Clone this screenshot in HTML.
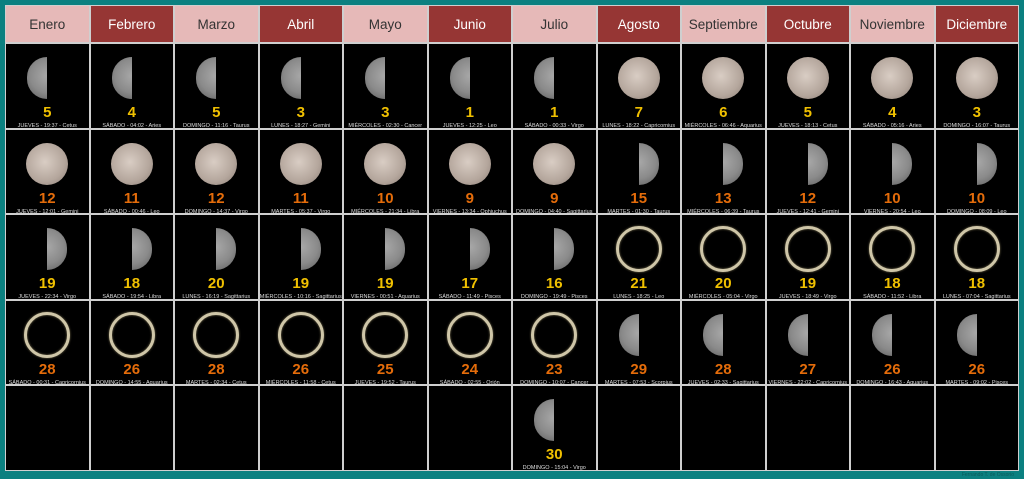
<!DOCTYPE html>
<html><head><meta charset="utf-8"><style>
*{margin:0;padding:0;box-sizing:border-box}
body{width:1024px;height:479px;background:#0b8080;position:relative;overflow:hidden;font-family:"Liberation Sans",sans-serif}
.g{position:absolute;left:5px;top:5px;width:1014px;height:466px;background:#cfcfcf;display:grid;grid-template-columns:repeat(12,1fr);grid-template-rows:36px repeat(5,1fr);gap:2px;border:1px solid #cfcfcf}
.h{display:flex;align-items:center;justify-content:center;font-size:13.5px;background:#e6b9b8;color:#333}
.h.d{background:#963634;color:#fff}
.c{background:#000;position:relative}
.m{position:absolute;top:13px;left:50%}
.l{width:20px;height:42px;margin-left:-20px;border-radius:21px 0 0 21px;background:radial-gradient(circle at 100% 45%,#a8a8a8,#8a8a8a 55%,#5a5a5a)}
.r{width:20px;height:42px;margin-left:0;border-radius:0 21px 21px 0;background:radial-gradient(circle at 0% 45%,#a8a8a8,#8a8a8a 55%,#5a5a5a)}
.f{width:42px;height:42px;margin-left:-21px;border-radius:50%;background:radial-gradient(circle at 45% 45%,#d9cdc4,#b4a69c 60%,#8a7c74)}
.n{width:46px;height:46px;margin-left:-23px;top:11px;border-radius:50%;border:3px solid #cfc6a8;box-shadow:inset 0 0 2px #7a7050,0 0 2px #7a7050}
.num{position:absolute;top:60px;width:100%;text-align:center;font-weight:bold;font-size:15px;color:#f0c000}
.o .num{color:#e46c0a}
.t{position:absolute;top:79px;width:100%;text-align:center;font-size:5.5px;color:#ddd;white-space:nowrap}
.cr{position:absolute;right:10px;bottom:1px;font-size:5px;color:#0a5a5a}
</style></head><body>
<div class="g">
<div class="h">Enero</div><div class="h d">Febrero</div><div class="h">Marzo</div><div class="h d">Abril</div><div class="h">Mayo</div><div class="h d">Junio</div><div class="h">Julio</div><div class="h d">Agosto</div><div class="h">Septiembre</div><div class="h d">Octubre</div><div class="h">Noviembre</div><div class="h d">Diciembre</div>

<div class="c"><div class="m l"></div><div class="num">5</div><div class="t">JUEVES - 19:37 - Cetus</div></div>
<div class="c"><div class="m l"></div><div class="num">4</div><div class="t">SÁBADO - 04:02 - Aries</div></div>
<div class="c"><div class="m l"></div><div class="num">5</div><div class="t">DOMINGO - 11:16 - Taurus</div></div>
<div class="c"><div class="m l"></div><div class="num">3</div><div class="t">LUNES - 18:27 - Gemini</div></div>
<div class="c"><div class="m l"></div><div class="num">3</div><div class="t">MIÉRCOLES - 02:30 - Cancer</div></div>
<div class="c"><div class="m l"></div><div class="num">1</div><div class="t">JUEVES - 12:25 - Leo</div></div>
<div class="c"><div class="m l"></div><div class="num">1</div><div class="t">SÁBADO - 00:33 - Virgo</div></div>
<div class="c"><div class="m f"></div><div class="num">7</div><div class="t">LUNES - 18:22 - Capricornius</div></div>
<div class="c"><div class="m f"></div><div class="num">6</div><div class="t">MIÉRCOLES - 06:46 - Aquarius</div></div>
<div class="c"><div class="m f"></div><div class="num">5</div><div class="t">JUEVES - 18:13 - Cetus</div></div>
<div class="c"><div class="m f"></div><div class="num">4</div><div class="t">SÁBADO - 05:16 - Aries</div></div>
<div class="c"><div class="m f"></div><div class="num">3</div><div class="t">DOMINGO - 16:07 - Taurus</div></div>

<div class="c o"><div class="m f"></div><div class="num">12</div><div class="t">JUEVES - 12:01 - Gemini</div></div>
<div class="c o"><div class="m f"></div><div class="num">11</div><div class="t">SÁBADO - 00:46 - Leo</div></div>
<div class="c o"><div class="m f"></div><div class="num">12</div><div class="t">DOMINGO - 14:37 - Virgo</div></div>
<div class="c o"><div class="m f"></div><div class="num">11</div><div class="t">MARTES - 05:37 - Virgo</div></div>
<div class="c o"><div class="m f"></div><div class="num">10</div><div class="t">MIÉRCOLES - 21:34 - Libra</div></div>
<div class="c o"><div class="m f"></div><div class="num">9</div><div class="t">VIERNES - 13:34 - Ophiuchus</div></div>
<div class="c o"><div class="m f"></div><div class="num">9</div><div class="t">DOMINGO - 04:40 - Sagittarius</div></div>
<div class="c o"><div class="m r"></div><div class="num">15</div><div class="t">MARTES - 01:30 - Taurus</div></div>
<div class="c o"><div class="m r"></div><div class="num">13</div><div class="t">MIÉRCOLES - 06:39 - Taurus</div></div>
<div class="c o"><div class="m r"></div><div class="num">12</div><div class="t">JUEVES - 12:41 - Gemini</div></div>
<div class="c o"><div class="m r"></div><div class="num">10</div><div class="t">VIERNES - 20:54 - Leo</div></div>
<div class="c o"><div class="m r"></div><div class="num">10</div><div class="t">DOMINGO - 08:09 - Leo</div></div>

<div class="c"><div class="m r"></div><div class="num">19</div><div class="t">JUEVES - 22:34 - Virgo</div></div>
<div class="c"><div class="m r"></div><div class="num">18</div><div class="t">SÁBADO - 19:54 - Libra</div></div>
<div class="c"><div class="m r"></div><div class="num">20</div><div class="t">LUNES - 16:19 - Sagittarius</div></div>
<div class="c"><div class="m r"></div><div class="num">19</div><div class="t">MIÉRCOLES - 10:16 - Sagittarius</div></div>
<div class="c"><div class="m r"></div><div class="num">19</div><div class="t">VIERNES - 00:51 - Aquarius</div></div>
<div class="c"><div class="m r"></div><div class="num">17</div><div class="t">SÁBADO - 11:49 - Pisces</div></div>
<div class="c"><div class="m r"></div><div class="num">16</div><div class="t">DOMINGO - 19:49 - Pisces</div></div>
<div class="c"><div class="m n"></div><div class="num">21</div><div class="t">LUNES - 18:25 - Leo</div></div>
<div class="c"><div class="m n"></div><div class="num">20</div><div class="t">MIÉRCOLES - 05:04 - Virgo</div></div>
<div class="c"><div class="m n"></div><div class="num">19</div><div class="t">JUEVES - 18:49 - Virgo</div></div>
<div class="c"><div class="m n"></div><div class="num">18</div><div class="t">SÁBADO - 11:52 - Libra</div></div>
<div class="c"><div class="m n"></div><div class="num">18</div><div class="t">LUNES - 07:04 - Sagittarius</div></div>

<div class="c o"><div class="m n"></div><div class="num">28</div><div class="t">SÁBADO - 00:31 - Capricornius</div></div>
<div class="c o"><div class="m n"></div><div class="num">26</div><div class="t">DOMINGO - 14:55 - Aquarius</div></div>
<div class="c o"><div class="m n"></div><div class="num">28</div><div class="t">MARTES - 02:34 - Cetus</div></div>
<div class="c o"><div class="m n"></div><div class="num">26</div><div class="t">MIÉRCOLES - 11:58 - Cetus</div></div>
<div class="c o"><div class="m n"></div><div class="num">25</div><div class="t">JUEVES - 19:52 - Taurus</div></div>
<div class="c o"><div class="m n"></div><div class="num">24</div><div class="t">SÁBADO - 02:55 - Orión</div></div>
<div class="c o"><div class="m n"></div><div class="num">23</div><div class="t">DOMINGO - 10:07 - Cancer</div></div>
<div class="c o"><div class="m l"></div><div class="num">29</div><div class="t">MARTES - 07:53 - Scorpius</div></div>
<div class="c o"><div class="m l"></div><div class="num">28</div><div class="t">JUEVES - 02:33 - Sagittarius</div></div>
<div class="c o"><div class="m l"></div><div class="num">27</div><div class="t">VIERNES - 22:02 - Capricornius</div></div>
<div class="c o"><div class="m l"></div><div class="num">26</div><div class="t">DOMINGO - 16:43 - Aquarius</div></div>
<div class="c o"><div class="m l"></div><div class="num">26</div><div class="t">MARTES - 09:02 - Pisces</div></div>

<div class="c"></div><div class="c"></div><div class="c"></div><div class="c"></div><div class="c"></div><div class="c"></div>
<div class="c"><div class="m l"></div><div class="num">30</div><div class="t">DOMINGO - 15:04 - Virgo</div></div>
<div class="c"></div><div class="c"></div><div class="c"></div><div class="c"></div><div class="c"></div>
</div>
<div class="cr">Fernando T. de Ossorio</div>
</body></html>
